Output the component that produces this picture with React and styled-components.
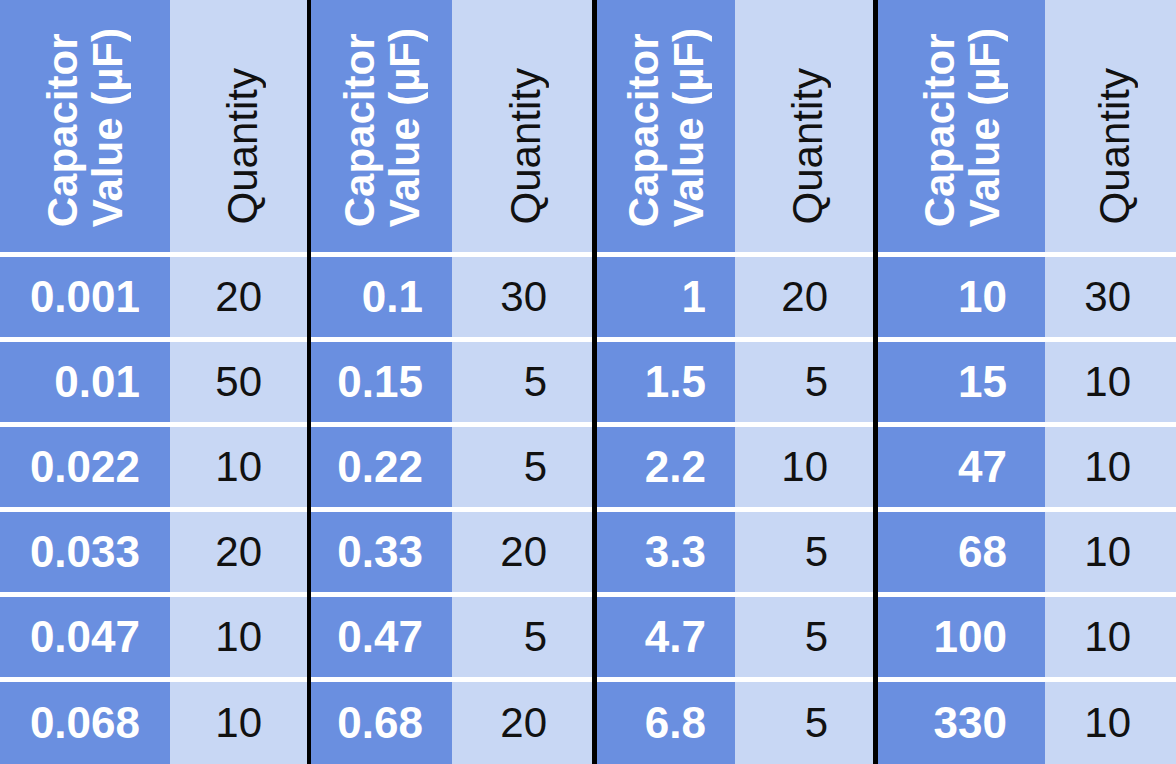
import React from "react";
import styled, { createGlobalStyle } from "styled-components";

const GlobalStyle = createGlobalStyle`
  html, body {
    margin: 0;
    padding: 0;
    background: #ffffff;
  }
  body {
    font-family: "Liberation Sans", Arial, sans-serif;
  }
`;

const Table = styled.div`
  display: flex;
  width: 1176px;
  height: 764px;
  overflow: hidden;
`;

const Group = styled.div`
  display: flex;
  flex-direction: column;
  border-left: ${(p) => (p.first ? "none" : `${p.line}px solid #000`)};
`;

const HeaderRow = styled.div`
  display: flex;
  height: 252px;
  flex: none;
`;

const Row = styled.div`
  display: flex;
  height: 80px;
  flex: ${(p) => (p.last ? "1" : "none")};
  border-top: 5px solid #ffffff;
`;

const ValueHead = styled.div`
  width: ${(p) => p.w}px;
  background: #6a8fe0;
  display: flex;
  justify-content: center;
  align-items: flex-end;
  padding-bottom: 25px;
  box-sizing: border-box;
`;

const QtyHead = styled.div`
  width: ${(p) => p.w}px;
  background: #c8d7f4;
  display: flex;
  justify-content: center;
  align-items: flex-end;
  padding-bottom: 28px;
  padding-left: 8px;
  box-sizing: border-box;
`;

const Rotated = styled.div`
  writing-mode: vertical-rl;
  transform: rotate(180deg);
  font-size: 42px;
  font-weight: ${(p) => (p.bold ? 700 : 400)};
  line-height: ${(p) => (p.bold ? 45 : 42)}px;
  color: ${(p) => (p.bold ? "#ffffff" : "#111111")};
  white-space: nowrap;
`;

const ValueCell = styled.div`
  width: ${(p) => p.w}px;
  background: #6a8fe0;
  color: #ffffff;
  font-weight: 700;
  font-size: 44px;
  display: flex;
  align-items: center;
  justify-content: flex-end;
  padding-right: ${(p) => p.pad}px;
  box-sizing: border-box;
`;

const QtyCell = styled.div`
  width: ${(p) => p.w}px;
  background: #c8d7f4;
  color: #111111;
  font-size: 42px;
  display: flex;
  align-items: center;
  justify-content: flex-end;
  padding-right: 45px;
  box-sizing: border-box;
`;

const groups = [
  {
    vw: 170, qw: 137, pad: 30, line: 0,
    rows: [["0.001", 20], ["0.01", 50], ["0.022", 10], ["0.033", 20], ["0.047", 10], ["0.068", 10]],
  },
  {
    vw: 141, qw: 140, pad: 29, line: 4,
    rows: [["0.1", 30], ["0.15", 5], ["0.22", 5], ["0.33", 20], ["0.47", 5], ["0.68", 20]],
  },
  {
    vw: 138, qw: 138, pad: 29, line: 5,
    rows: [["1", 20], ["1.5", 5], ["2.2", 10], ["3.3", 5], ["4.7", 5], ["6.8", 5]],
  },
  {
    vw: 167, qw: 131, pad: 38, line: 5,
    rows: [["10", 30], ["15", 10], ["47", 10], ["68", 10], ["100", 10], ["330", 10]],
  },
];

export default function App() {
  return (
    <>
      <GlobalStyle />
      <Table>
        {groups.map((g, gi) => (
          <Group key={gi} first={gi === 0} line={g.line}>
            <HeaderRow>
              <ValueHead w={g.vw}>
                <Rotated bold>
                  Capacitor
                  <br />
                  Value (µF)
                </Rotated>
              </ValueHead>
              <QtyHead w={g.qw}>
                <Rotated>Quantity</Rotated>
              </QtyHead>
            </HeaderRow>
            {g.rows.map(([v, q], ri) => (
              <Row key={ri} last={ri === g.rows.length - 1}>
                <ValueCell w={g.vw} pad={g.pad}>{v}</ValueCell>
                <QtyCell w={g.qw}>{q}</QtyCell>
              </Row>
            ))}
          </Group>
        ))}
      </Table>
    </>
  );
}
